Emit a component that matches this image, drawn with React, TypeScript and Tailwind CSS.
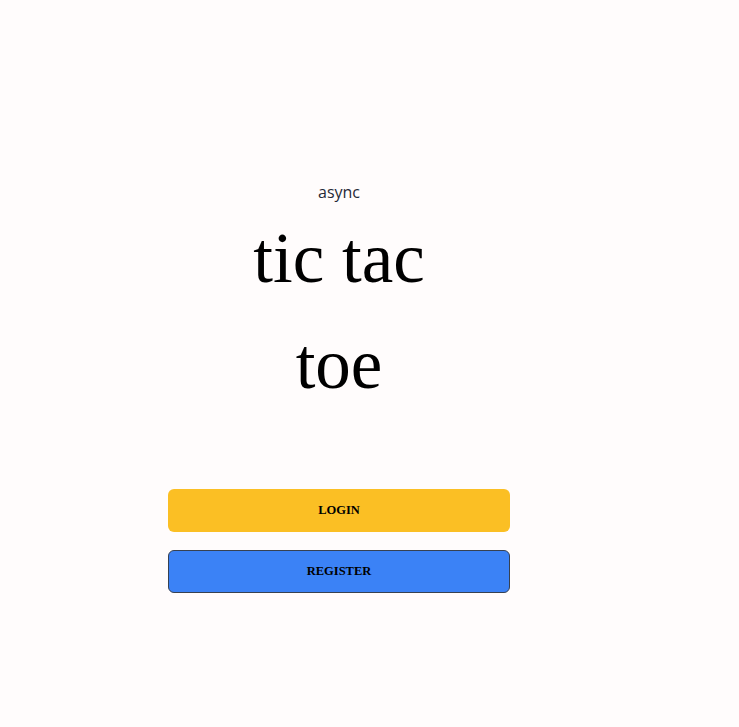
export default function App() {
	return (
		<main className="w-full min-h-[727px] bg-[#fffcfc]">
			<div className="w-[678px] flex flex-col items-center pt-[180px]">
				<p className="text-[16px] leading-[24px] text-[#1f2937] font-['Open_Sans',sans-serif]">async</p>
				<h1 className="w-[220px] text-center text-[71px] leading-[106px] text-black font-['Liberation_Serif',serif] mt-[1px]">
					tic tac toe
				</h1>
				<div className="w-[342px] flex flex-col gap-[18px] mt-[72px]">
					<button className="h-[43px] w-full rounded-md bg-[#fbbf24] text-[12.5px] font-bold text-black font-['Liberation_Serif',serif]">
						LOGIN
					</button>
					<button className="h-[43px] w-full rounded-md bg-[#3b82f6] border border-[#374151] text-[12.5px] font-bold text-black font-['Liberation_Serif',serif]">
						REGISTER
					</button>
				</div>
			</div>
		</main>
	);
}
